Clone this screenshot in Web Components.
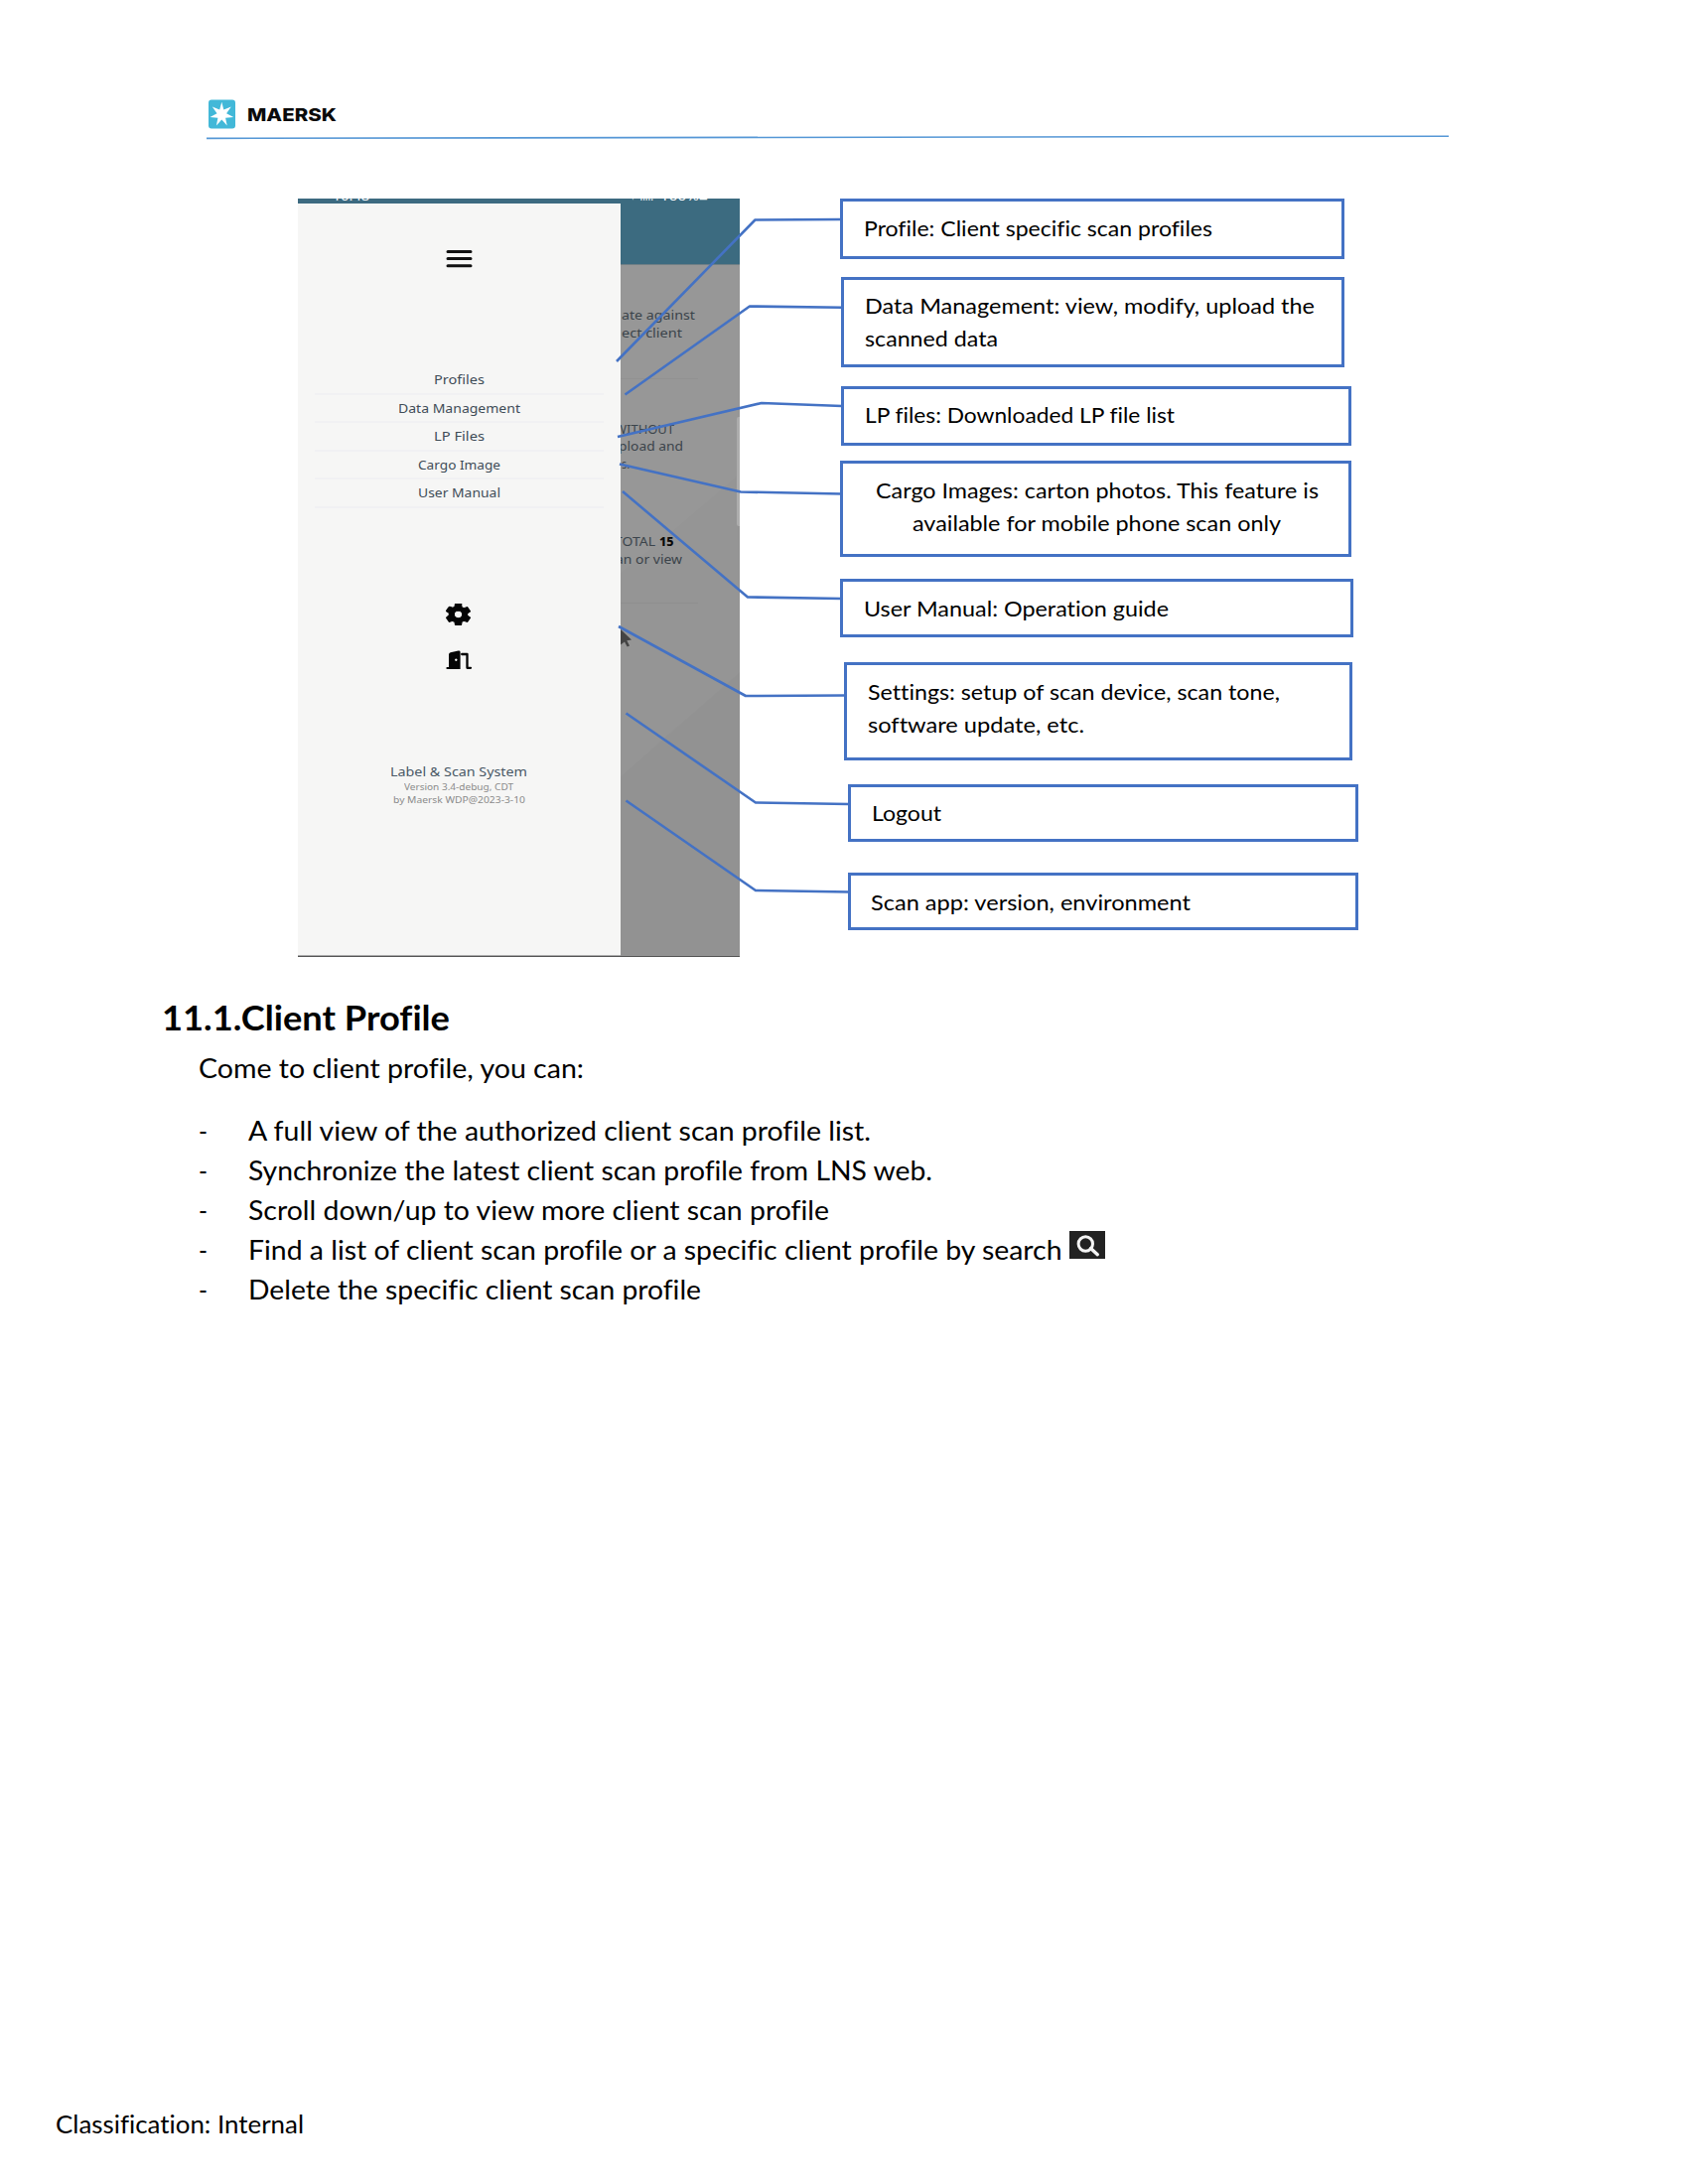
<!DOCTYPE html>
<html lang="en">
<head>
<meta charset="utf-8">
<title>Client Profile</title>
<style>
html,body{margin:0;background:#fff}
body{width:1700px;height:2200px;overflow:hidden;font-family:Lato,"Liberation Sans",sans-serif;font-variant-ligatures:none;color:#000}
</style>
</head>
<body>
<manual-page></manual-page>
<script>
const define = (name, html, ready) => customElements.define(name, class extends HTMLElement {
  constructor() {
    super();
    this.attachShadow({mode: 'open'}).innerHTML = html;
  }
  connectedCallback() { if (ready) ready(this, this.shadowRoot); }
});

/* One line of text, condensed or widened to the width given in "w". */
define('fit-text', `<style>
:host{display:block;white-space:nowrap;flex:none}
span{display:inline-block;transform-origin:0 50%;vertical-align:top}
</style><span><slot></slot></span>`, (el, root) => {
  const s = root.querySelector('span');
  const w = parseFloat(el.getAttribute('w'));
  const n = s.getBoundingClientRect().width;
  el.style.width = w + 'px';
  if (n) s.style.transform = `scaleX(${w / n})`;
});

define('page-header', `<style>
:host{display:block;height:200px;box-sizing:border-box;padding:100px 0 0 208px}
.brand{display:flex;align-items:flex-start;padding-left:2px;height:36px}
.brand svg{display:block}
fit-text{margin:3px 0 0 11.5px;font:800 17.5px/26px Inter,sans-serif;color:#0b0b0b}
.rule{display:block}
</style>
<div class="brand">
<svg width="27" height="30" viewBox="0 0 27 30"><rect y=".5" width="27" height="29" rx="3" fill="#42b8d8"/>
<path fill="#fff" d="M13.3 2.7 15.3 10.6 22.8 7.4 18.1 14.2 25.2 18.1 17.1 18.8 18.7 26.5 13.3 20.6 7.9 26.5 9.4 18.8 1.5 18.1 8.5 14.2 3.8 7.4 11.2 10.6Z"/></svg>
<fit-text w="90">MAERSK</fit-text>
</div>
<svg class="rule" width="1252" height="6" viewBox="0 0 1252 6"><path d="M0 3.4 1251 1.2" stroke="#5597d6" stroke-width="1.6"/></svg>`);

define('menu-item', `<style>
:host{display:flex;justify-content:center;height:28.5px;box-sizing:border-box;border-bottom:2px solid #f1f1f3;font-size:13px;line-height:22px;color:#3f4c57;padding-top:2px}
</style><slot></slot>`);

define('phone-screen', `<style>
:host{display:flex;width:445px;height:764px;box-sizing:border-box;overflow:hidden;background:#979797;font-family:"Noto Sans",sans-serif;position:relative;border-bottom:1px solid #555}
.panel{width:324.7px;flex:none;display:flex;flex-direction:column;background:#f6f6f5;border-top:5.5px solid #3c6a80;box-sizing:border-box;box-shadow:inset 0 -1px #aaa}
.burger{display:block;margin:45.5px 0 0 149px;flex:none}
nav{margin:98.5px 16.5px 0 17px}
.gear{display:block;margin:96.5px 0 0 149px;flex:none}
.door{display:block;margin:25px 0 0 149px;flex:none}
.about{display:flex;flex-direction:column;align-items:center;margin-top:93px;color:#8b8b8b;font-size:9.4px;line-height:12.6px}
.about .t{font-size:13px;line-height:19px;color:#4a5966}
.behind{flex:1;min-width:0;display:flex;flex-direction:column;color:#3b444b;font-size:13px;line-height:17.6px;overflow:hidden}
.bar{height:66px;background:#3c6b80;border-bottom:1px solid #707f86;flex:none}
.lines{display:flex;flex-direction:column;padding-left:1px}
.row{display:flex;gap:4px}
b{color:#0a0a0a;font-weight:800}
hr{border:0;height:1px;background:#919191;margin:0;width:78px}
.status{position:absolute;top:-11px;color:#fff;font-size:13px;line-height:16px}
.scroll{position:absolute;right:0;top:220px;width:3px;height:110px;background:#adadad;border-radius:2px 0 0 2px}
.cursor{position:absolute;left:323px;top:434px}
.sheen{position:absolute;left:325px;top:67px}
</style>
<div class="panel">
<svg class="burger" width="27" height="20" viewBox="0 0 27 20"><path d="M2 2.4h23M2 9.6h23M2 16.8h23" stroke="#111" stroke-width="3" stroke-linecap="round"/></svg>
<nav>
<menu-item><fit-text w="51">Profiles</fit-text></menu-item>
<menu-item><fit-text w="123">Data Management</fit-text></menu-item>
<menu-item><fit-text w="51">LP Files</fit-text></menu-item>
<menu-item><fit-text w="83">Cargo Image</fit-text></menu-item>
<menu-item><fit-text w="83">User Manual</fit-text></menu-item>
</nav>
<svg class="gear" width="25" height="22" viewBox="2.2 2 19.6 20" preserveAspectRatio="none"><path d="M19.14 12.94c.04-.3.06-.61.06-.94s-.02-.64-.07-.94l2.03-1.58a.49.49 0 0 0 .12-.61l-1.92-3.32a.49.49 0 0 0-.59-.22l-2.39.96a7 7 0 0 0-1.62-.94l-.36-2.54A.48.48 0 0 0 13.92 2h-3.84a.48.48 0 0 0-.47.41l-.36 2.54c-.59.24-1.13.57-1.62.94l-2.39-.96a.48.48 0 0 0-.59.22L2.74 8.47a.48.48 0 0 0 .12.61l2.03 1.58c-.05.3-.09.63-.09.94s.02.64.07.94l-2.01 1.98a.49.49 0 0 0-.12.61l1.92 3.32c.12.22.37.29.59.22l2.39-.96c.5.38 1.03.7 1.62.94l.36 2.54c.05.24.24.41.48.41h3.84c.24 0 .44-.17.47-.41l.36-2.54a7 7 0 0 0 1.62-.94l2.39.96c.22.08.47 0 .59-.22l1.92-3.32a.48.48 0 0 0-.12-.61zM12 15.3a3.3 3.3 0 1 1 0-6.6 3.3 3.3 0 0 1 0 6.6z" fill="#050505" stroke="#050505" stroke-width=".9" fill-rule="evenodd"/></svg>
<svg class="door" width="27" height="20" viewBox="0 0 27 20"><path fill="#050505" fill-rule="evenodd" d="M.8 17H3V4.5Q3 2.8 4.7 2.3L12.6.6Q14.6.3 14.6 2V19H.8Q0 18 .8 17ZM10.3 8.4a1.2 1.3 0 1 0 .01 0Z"/><path d="M16.2 4H21.5V17.8H25" fill="none" stroke="#050505" stroke-width="2.3" stroke-linejoin="round" stroke-linecap="round"/></svg>
<div class="about"><fit-text class="t" w="138">Label &amp; Scan System</fit-text><fit-text w="110">Version 3.4-debug, CDT</fit-text><fit-text w="133">by Maersk WDP@2023-3-10</fit-text></div>
</div>
<div class="behind">
<div class="bar"></div>
<div class="lines" style="margin-top:42px"><fit-text w="74">ate against</fit-text><fit-text w="61">ect client</fit-text></div>
<hr style="margin-top:36.5px">
<div class="lines" style="margin-top:42px"><fit-text w="60" style="margin-left:-6.5px">WITHOUT</fit-text><fit-text w="65" style="margin-left:-2.5px">pload and</fit-text><fit-text w="8">s.</fit-text></div>
<div class="lines" style="margin-top:61px"><div class="row"><fit-text w="41" style="margin-left:-6.5px">TOTAL</fit-text><fit-text w="14.5"><b>15</b></fit-text></div><fit-text w="67" style="margin-left:-6px">an or view</fit-text></div>
<hr style="margin-top:34px">
</div>
<svg class="sheen" width="120" height="697" viewBox="0 0 120 697"><path d="M120 210 50 270 0 310V697H120Z" fill="#000" opacity=".012"/><path d="M120 410 0 515V697H120Z" fill="#000" opacity=".015"/></svg>
<fit-text class="status" style="left:35px" w="37">10:48</fit-text>
<fit-text class="status" style="left:333px" w="25">✦ ıııı.</fit-text>
<fit-text class="status" style="left:365px" w="48">100%■</fit-text>
<div class="scroll"></div>
<svg class="cursor" width="15" height="19" viewBox="0 0 15 19"><path d="M2 0 13 10.5 8.3 11.3 11 16.5 8.7 17.6 6 12.4 2 15.5Z" fill="#444"/></svg>`);

define('call-out', `<style>
:host{position:absolute;box-sizing:border-box;border:3px solid #4472c4;background:#fff;font-size:22px;line-height:33px}
</style><slot></slot>`);

/* Screen capture with its callouts; boxes are placed on a free canvas. */
define('callout-figure', `<style>
:host{display:block;position:relative;height:764px}
phone-screen{margin-left:300px}
svg{position:absolute;left:0;top:0}
.c{display:flex;flex-direction:column;align-items:center}
</style>
<phone-screen></phone-screen>
<svg width="1700" height="764" viewBox="0 200 1700 764" fill="none" stroke="#4472c4" stroke-width="2.6" stroke-linejoin="round">
<path d="M848 221 760.5 221.5 621 364M848 309.7 755 308.5 629.5 397.5M848 409 767 406 622 440M848 497.5 746 495.5 624 467.5M848 603 753 601.5 627 495M851 700.5 751 701 623 631M855 810 761 808.5 630.5 718.5M855 898.5 761 897 630.5 806.5"/></svg>
<call-out style="left:846px;top:0;width:508px;height:61px;padding:9.5px 0 0 21px"><fit-text w="351">Profile: Client specific scan profiles</fit-text></call-out>
<call-out style="left:847px;top:78.5px;width:507px;height:91px;padding:9px 0 0 20.5px"><fit-text w="453">Data Management: view, modify, upload the</fit-text><fit-text w="134">scanned data</fit-text></call-out>
<call-out style="left:847px;top:188.5px;width:514px;height:60px;padding:9px 0 0 20.5px"><fit-text w="312">LP files: Downloaded LP file list</fit-text></call-out>
<call-out style="left:846px;top:264px;width:515px;height:97px;padding:9.5px 0 0 2px"><div class="c"><fit-text w="446">Cargo Images: carton photos. This feature is</fit-text><fit-text w="371">available for mobile phone scan only</fit-text></div></call-out>
<call-out style="left:846px;top:383px;width:517px;height:58.5px;padding:9.5px 0 0 20.5px"><fit-text w="307">User Manual: Operation guide</fit-text></call-out>
<call-out style="left:850px;top:467px;width:512px;height:98.5px;padding:9.5px 0 0 20.5px"><fit-text w="415">Settings: setup of scan device, scan tone,</fit-text><fit-text w="218">software update, etc.</fit-text></call-out>
<call-out style="left:854px;top:590px;width:514px;height:58px;padding:9px 0 0 20.5px"><fit-text w="70">Logout</fit-text></call-out>
<call-out style="left:854px;top:678.5px;width:514px;height:58px;padding:10px 0 0 20px"><fit-text w="322">Scan app: version, environment</fit-text></call-out>`);

define('dash-item', `<style>
:host{display:flex;height:40.2px;font-size:27px;line-height:40px}
i{font-style:normal;width:50px;flex:none}
div{display:flex}
</style><i><fit-text w="9">-</fit-text></i><div><slot></slot></div>`);

define('search-chip', `<style>
:host{display:block;width:36px;height:28px;background:#222}
svg{display:block}
</style><svg width="36" height="28" viewBox="0 0 36 28" fill="none" stroke="#f4f4f4"><circle cx="16.3" cy="13" r="7.2" stroke-width="3"/><path d="M21.5 17.5 28.3 23.7" stroke-width="3.4" stroke-linecap="round"/></svg>`);

define('profile-section', `<style>
:host{display:block;padding:39px 0 0 162.5px}
h2{margin:0;font-size:34.3px;line-height:44px;font-weight:700;display:flex}
.body{padding-left:37.5px}
.intro{font-size:27px;line-height:40px;margin:9px 0 22.5px}
search-chip{margin:1px 0 0 7px}
</style>
<h2><fit-text w="290">11.1.Client Profile</fit-text></h2>
<div class="body">
<fit-text class="intro" w="388">Come to client profile, you can:</fit-text>
<dash-item><fit-text w="627">A full view of the authorized client scan profile list.</fit-text></dash-item>
<dash-item><fit-text w="689">Synchronize the latest client scan profile from LNS web.</fit-text></dash-item>
<dash-item><fit-text w="585">Scroll down/up to view more client scan profile</fit-text></dash-item>
<dash-item><fit-text w="819.5">Find a list of client scan profile or a specific client profile by search</fit-text><search-chip></search-chip></dash-item>
<dash-item><fit-text w="456">Delete the specific client scan profile</fit-text></dash-item>
</div>`);

define('manual-page', `<style>
:host{display:flex;flex-direction:column;width:1700px;height:2200px;background:#fff}
footer{margin-top:auto;padding:0 0 41.5px 55.5px;font-size:24.5px;line-height:38px}
</style>
<page-header></page-header>
<callout-figure></callout-figure>
<profile-section></profile-section>
<footer><fit-text w="250">Classification: Internal</fit-text></footer>`);
</script>
</body>
</html>
